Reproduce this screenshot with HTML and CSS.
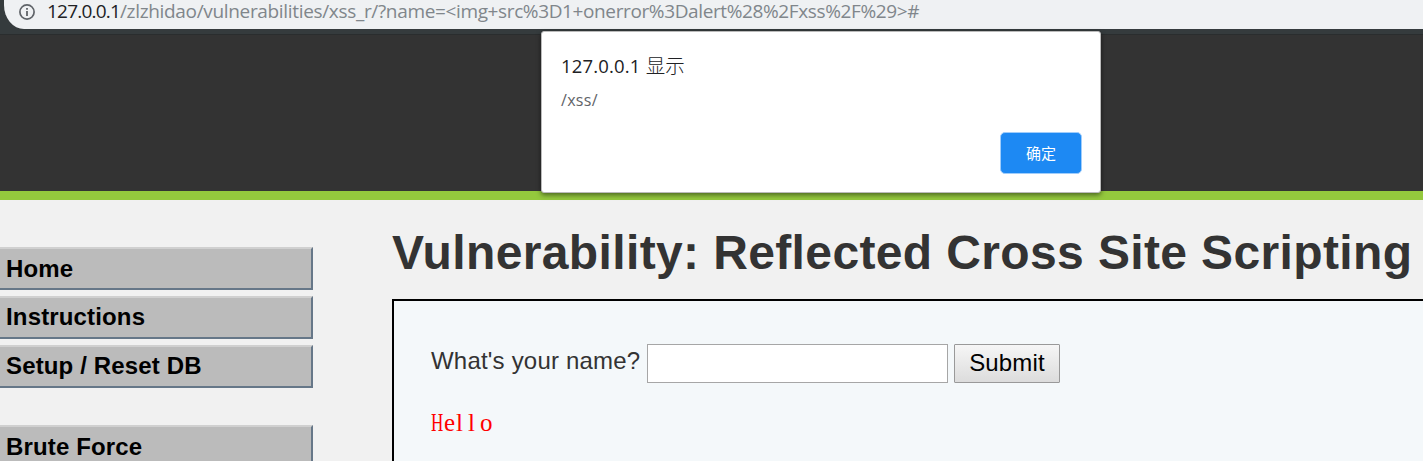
FILE: index.html
```
<!DOCTYPE html>
<html lang="en">
<head>
<meta charset="utf-8">
<title>Vulnerability: Reflected Cross Site Scripting</title>
<link rel="stylesheet" href="styles.css">
</head>
<body>
<div class="toolbar">
  <div class="omnibox">
    <svg class="info" viewBox="0 0 16 16" width="16" height="16"><circle cx="8" cy="8" r="7.1" fill="none" stroke="#5f6368" stroke-width="1.7"/><path d="M7.1 7.1h1.8V12H7.1zM7.1 4h1.8v1.8H7.1z" fill="#5f6368"/></svg>
    <div class="url"><span class="host">127.0.0.1</span><span class="path">/zlzhidao/vulnerabilities/xss_r/?name=</span><span class="query">&lt;img+src%3D1+onerror%3Dalert%28%2Fxss%2F%29&gt;#</span></div>
  </div>
</div>
<div class="banner"></div>
<div class="page">
  <nav class="menu">
    <ul class="group">
      <li class="item">Home</li>
      <li class="item">Instructions</li>
      <li class="item">Setup / Reset DB</li>
    </ul>
    <ul class="group">
      <li class="item">Brute Force</li>
    </ul>
  </nav>
  <main class="content">
    <h1 class="title">Vulnerability: Reflected Cross Site Scripting</h1>
    <section class="panel">
      <form class="form">
        <label class="label" for="name">What's your name?</label>
        <input class="field" id="name" type="text">
        <button class="submit" type="button">Submit</button>
      </form>
      <pre class="hello"><span class="cap">H</span><span class="e">e</span><span class="l">ll</span>o</pre>
    </section>
  </main>
</div>
<div class="dialog">
  <div class="dialog-title"><span class="dialog-host">127.0.0.1</span> 显示</div>
  <div class="dialog-text">/xss/</div>
  <button class="ok" type="button">确定</button>
</div>
</body>
</html>
```
FILE: styles.css
```
* { box-sizing: border-box; }
body { margin: 0; height: 461px; overflow: hidden; background: #f1f1f1; font-family: "Liberation Sans", sans-serif; color: #333; }
.toolbar { height: 35px; background: #353b3d; border-bottom: 1px solid #2a2d2e; padding-left: 4px; }
.omnibox { height: 29px; background: #eff1f3; border-radius: 0 0 0 20px / 0 0 0 24px; display: flex; padding-left: 15px; }
.info { margin-top: 4px; flex: none; }
.url { margin-left: 12px; font: 19px/22px "Open Sans", sans-serif; color: #80868b; white-space: pre; display: flex; }
.host { color: #202124; letter-spacing: -0.8px; }
.path { letter-spacing: -0.33px; }
.query { letter-spacing: -0.38px; }
.banner { height: 165px; background: #333; border-bottom: 9px solid #94c83d; }
.page { display: flex; height: 261px; }
.menu { width: 313px; flex: none; padding-top: 47px; }
.group { list-style: none; margin: 0 0 37px; padding: 0; display: grid; gap: 6px; }
.item { height: 43px; background: #bbb; border: 2px solid; border-color: #d0d0d0 #678 #678 #bbb; border-left: 0; padding-left: 6px; font-weight: bold; font-size: 24px; line-height: 39px; color: #000; letter-spacing: .15px; }
.item + .item { line-height: 37px; }
.content { flex: none; width: 1100px; margin-left: 79px; }
.title { margin: 0; height: 99px; padding-top: 25px; font-size: 48px; line-height: 56px; letter-spacing: .37px; white-space: nowrap; }
.panel { height: 180px; border: 2px solid #000; background: #f4f8fa; padding: 43px 0 0 37px; }
.form { display: flex; height: 39px; font-size: 24px; }
.label { width: 216px; line-height: 34px; letter-spacing: .2px; white-space: nowrap; }
.field { width: 301px; height: 39px; border: 1px solid #a6a6a6; background: #fff; padding: 2px; }
.submit { width: 106px; height: 39px; margin-left: 6px; border: 1px solid #999; border-radius: 1px; background: linear-gradient(#f6f6f6, #dcdcdc); font: 24px "Liberation Sans", sans-serif; letter-spacing: .15px; color: #000; padding: 0 0 2px; }
.hello { margin: 26px 0 0; font: 25px/28px "Liberation Serif", serif; color: #f00; display: flex; }
.cap { width: 13px; transform: scaleX(.68); transform-origin: 0 0; }
.e { width: 12px; }
.l { letter-spacing: 5px; }
.dialog { position: absolute; left: 541px; top: 31px; width: 560px; height: 162px; background: #fff; border: 1px solid #bbb; border-radius: 3px; box-shadow: 0 2px 5px rgba(0,0,0,.5); padding: 19px 18px 0 19px; display: flex; flex-direction: column; }
.dialog-title { font: 19.5px/28px "Noto Sans CJK SC", sans-serif; font-weight: 300; color: #202124; white-space: pre; }
.dialog-host { font: 18.5px/28px "Open Sans", sans-serif; letter-spacing: .15px; margin-right: 1px; }
.dialog-text { margin-top: 6px; font: 16px/28px "Open Sans", sans-serif; letter-spacing: .3px; color: #5f6368; }
.ok { align-self: flex-end; width: 82px; height: 42px; margin-top: 18px; border: 1px solid #a0cdfb; border-radius: 5px; background: #1d89f3; color: #fff; font: 15px "Noto Sans CJK SC", sans-serif; padding: 0 0 2px; }
```
